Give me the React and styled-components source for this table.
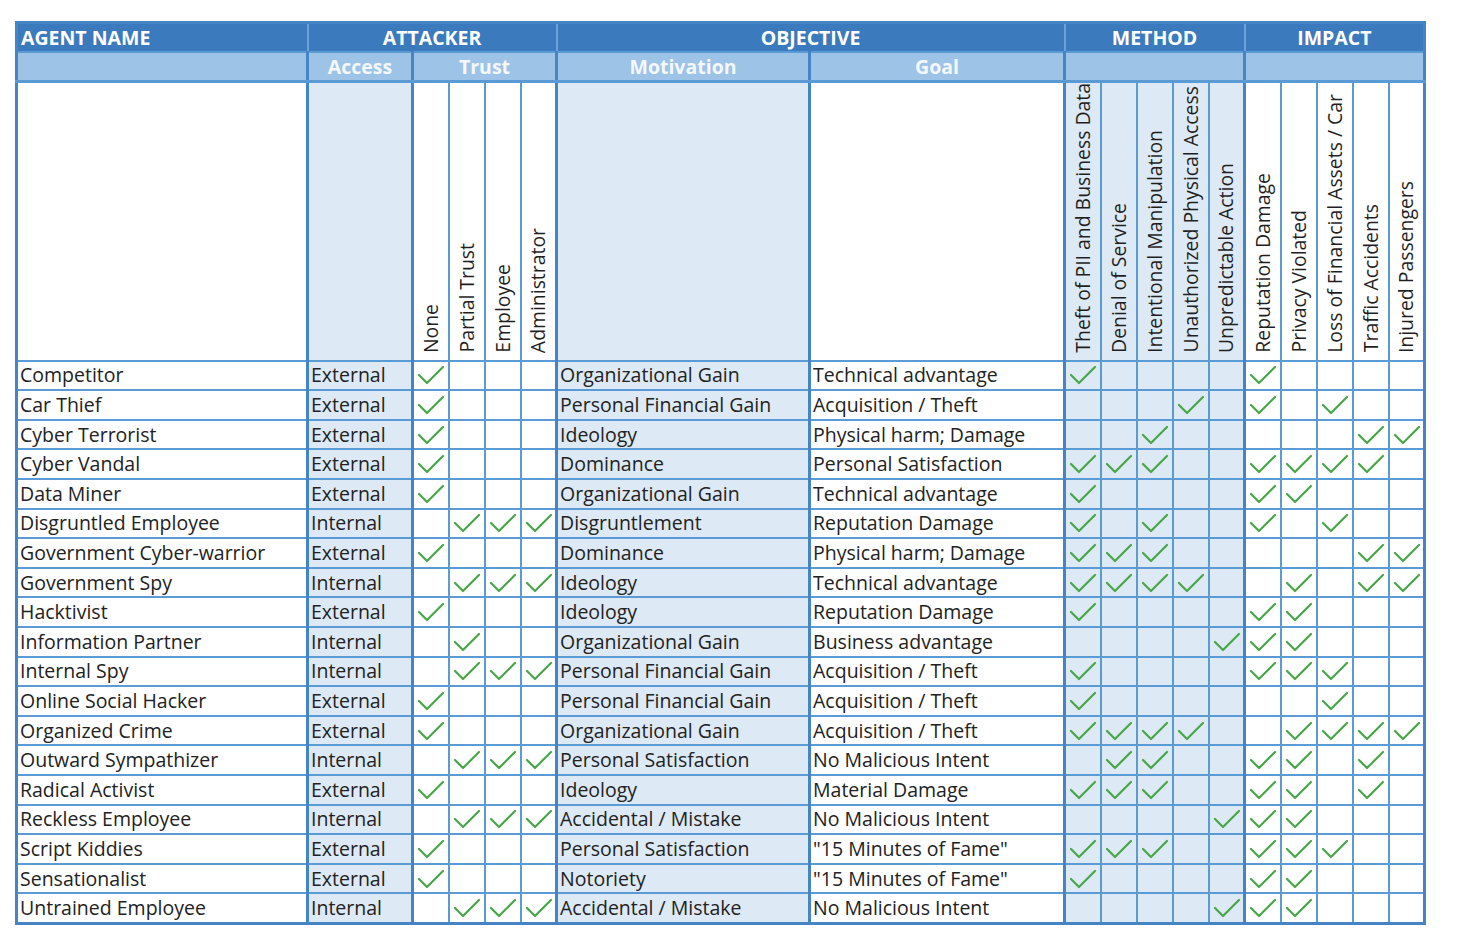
import React from 'react';
import styled, { createGlobalStyle, css } from 'styled-components';

const GlobalStyle = createGlobalStyle`
  body {
    margin: 0;
    background: #ffffff;
    font-family: "Open Sans", "Liberation Sans", sans-serif;
  }
`;

const DARK = '#3b7abd';
const MID = '#9dc3e6';
const LIGHT = '#dde9f5';
const LINE = '#5b9bd5';
const THICK = '#4585c6';

const Page = styled.div`
  padding: 21px 0 0 15px;
`;

const Grid = styled.table`
  border-collapse: collapse;
  table-layout: fixed;
  width: 1410px;
  border: 3px solid ${THICK};
  color: #222222;
  font-size: 19.5px;
`;

const groupEdge = css`
  ${(p) => p.$edge && `border-left: 3px solid ${THICK};`}
`;

const TopHead = styled.th`
  height: 27px;
  padding: 0 3px;
  background: ${DARK};
  color: #ffffff;
  font-weight: 700;
  font-size: 19.5px;
  line-height: 24px;
  text-align: ${(p) => (p.$left ? 'left' : 'center')};
  border-left: 2px solid #6aa3d8;
  border-bottom: 2px solid ${LINE};
  white-space: nowrap;
`;

const SubHead = styled.th`
  height: 27px;
  padding: 0 3px;
  background: ${MID};
  color: #f4f8fc;
  font-weight: 700;
  font-size: 19.5px;
  line-height: 24px;
  text-align: center;
  border: 2px solid ${LINE};
  border-bottom: 3px solid ${LINE};
  ${groupEdge}
`;

const RotHead = styled.th`
  height: 267px;
  padding: 0 0 1px;
  vertical-align: bottom;
  background: ${(p) => (p.$shade ? LIGHT : '#ffffff')};
  border: 2px solid ${LINE};
  font-weight: 400;
  ${groupEdge}
`;

const RotText = styled.span`
  display: inline-block;
  writing-mode: vertical-rl;
  transform: rotate(180deg);
  white-space: nowrap;
  font-size: 19.4px;
  line-height: 22px;
  color: #1f1f1f;
`;

const Cell = styled.td`
  height: 27.6px;
  padding: 0 2px;
  background: ${(p) => (p.$shade ? LIGHT : '#ffffff')};
  border: 2px solid ${LINE};
  white-space: nowrap;
  overflow: hidden;
  vertical-align: middle;
  line-height: 24px;
  ${groupEdge}
`;

const MarkCell = styled(Cell)`
  padding: 0 0 0 3px;
  line-height: 0;
`;

const Check = () => (
  <svg width="28" height="22" viewBox="0 0 28 22">
    <polyline
      points="2,11 10,19 26,3"
      fill="none"
      stroke="#48a648"
      strokeWidth="2.2"
      strokeLinecap="round"
      strokeLinejoin="round"
    />
  </svg>
);

const trustCols = ['None', 'Partial Trust', 'Employee', 'Administrator'];
const methodCols = [
  'Theft of PII and Business Data',
  'Denial of Service',
  'Intentional Manipulation',
  'Unauthorized Physical Access',
  'Unpredictable Action',
];
const impactCols = [
  'Reputation Damage',
  'Privacy Violated',
  'Loss of Financial Assets / Car',
  'Traffic Accidents',
  'Injured Passengers',
];

const agents = [
  ['Competitor', 'External', '1000', 'Organizational Gain', 'Technical advantage', '10000', '10000'],
  ['Car Thief', 'External', '1000', 'Personal Financial Gain', 'Acquisition / Theft', '00010', '10100'],
  ['Cyber Terrorist', 'External', '1000', 'Ideology', 'Physical harm; Damage', '00100', '00011'],
  ['Cyber Vandal', 'External', '1000', 'Dominance', 'Personal Satisfaction', '11100', '11110'],
  ['Data Miner', 'External', '1000', 'Organizational Gain', 'Technical advantage', '10000', '11000'],
  ['Disgruntled Employee', 'Internal', '0111', 'Disgruntlement', 'Reputation Damage', '10100', '10100'],
  ['Government Cyber-warrior', 'External', '1000', 'Dominance', 'Physical harm; Damage', '11100', '00011'],
  ['Government Spy', 'Internal', '0111', 'Ideology', 'Technical advantage', '11110', '01011'],
  ['Hacktivist', 'External', '1000', 'Ideology', 'Reputation Damage', '10000', '11000'],
  ['Information Partner', 'Internal', '0100', 'Organizational Gain', 'Business advantage', '00001', '11000'],
  ['Internal Spy', 'Internal', '0111', 'Personal Financial Gain', 'Acquisition / Theft', '10000', '11100'],
  ['Online Social Hacker', 'External', '1000', 'Personal Financial Gain', 'Acquisition / Theft', '10000', '00100'],
  ['Organized Crime', 'External', '1000', 'Organizational Gain', 'Acquisition / Theft', '11110', '01111'],
  ['Outward Sympathizer', 'Internal', '0111', 'Personal Satisfaction', 'No Malicious Intent', '01100', '11010'],
  ['Radical Activist', 'External', '1000', 'Ideology', 'Material Damage', '11100', '11010'],
  ['Reckless Employee', 'Internal', '0111', 'Accidental / Mistake', 'No Malicious Intent', '00001', '11000'],
  ['Script Kiddies', 'External', '1000', 'Personal Satisfaction', '"15 Minutes of Fame"', '11100', '11100'],
  ['Sensationalist', 'External', '1000', 'Notoriety', '"15 Minutes of Fame"', '10000', '11000'],
  ['Untrained Employee', 'Internal', '0111', 'Accidental / Mistake', 'No Malicious Intent', '00001', '11000'],
];

const Marks = ({ bits, shade }) =>
  bits.split('').map((b, i) => (
    <MarkCell key={i} $shade={shade} $edge={i === 0}>
      {b === '1' && <Check />}
    </MarkCell>
  ));

export default function App() {
  return (
    <Page>
      <GlobalStyle />
      <Grid>
        <colgroup>
          <col style={{ width: 291 }} />
          <col style={{ width: 105 }} />
          {trustCols.map((c) => (
            <col key={c} style={{ width: 36 }} />
          ))}
          <col style={{ width: 253 }} />
          <col style={{ width: 255 }} />
          {methodCols.concat(impactCols).map((c) => (
            <col key={c} style={{ width: 36 }} />
          ))}
        </colgroup>
        <thead>
          <tr>
            <TopHead $left>AGENT NAME</TopHead>
            <TopHead colSpan={5}>ATTACKER</TopHead>
            <TopHead colSpan={2}>OBJECTIVE</TopHead>
            <TopHead colSpan={5}>METHOD</TopHead>
            <TopHead colSpan={5}>IMPACT</TopHead>
          </tr>
          <tr>
            <SubHead />
            <SubHead $edge>Access</SubHead>
            <SubHead $edge colSpan={4}>Trust</SubHead>
            <SubHead $edge>Motivation</SubHead>
            <SubHead $edge>Goal</SubHead>
            <SubHead $edge colSpan={5} />
            <SubHead $edge colSpan={5} />
          </tr>
          <tr>
            <RotHead />
            <RotHead $edge $shade />
            {trustCols.map((c, i) => (
              <RotHead key={c} $edge={i === 0}>
                <RotText>{c}</RotText>
              </RotHead>
            ))}
            <RotHead $edge $shade />
            <RotHead $edge />
            {methodCols.map((c, i) => (
              <RotHead key={c} $edge={i === 0} $shade>
                <RotText>{c}</RotText>
              </RotHead>
            ))}
            {impactCols.map((c, i) => (
              <RotHead key={c} $edge={i === 0}>
                <RotText>{c}</RotText>
              </RotHead>
            ))}
          </tr>
        </thead>
        <tbody>
          {agents.map(([name, access, trust, motive, goal, method, impact]) => (
            <tr key={name}>
              <Cell>{name}</Cell>
              <Cell $edge $shade>{access}</Cell>
              <Marks bits={trust} />
              <Cell $edge $shade>{motive}</Cell>
              <Cell $edge>{goal}</Cell>
              <Marks bits={method} shade />
              <Marks bits={impact} />
            </tr>
          ))}
        </tbody>
      </Grid>
    </Page>
  );
}
